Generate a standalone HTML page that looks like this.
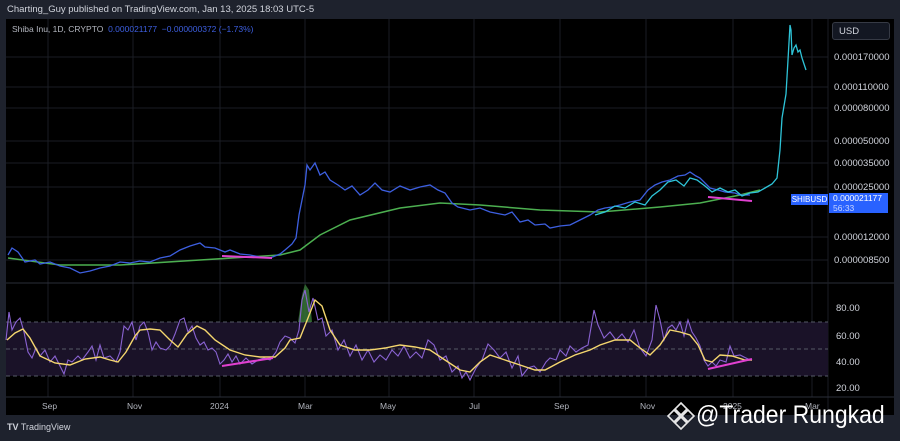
<!DOCTYPE html>
<html><head><style>
body{margin:0;width:900px;height:441px;background:#1e222d;font-family:"Liberation Sans",sans-serif;overflow:hidden;position:relative}
.t{position:absolute;white-space:nowrap}
.ax{position:absolute;left:834px;font-size:9.5px;color:#d1d4dc}
</style></head><body>
<div class="t" style="left:7px;top:4px;font-size:9.5px;color:#d1d4dc">Charting_Guy published on TradingView.com, Jan 13, 2025 18:03 UTC-5</div>
<div style="position:absolute;left:6px;top:19px;width:888px;height:396px;background:#000"></div>
<svg style="position:absolute;left:0;top:0" width="900" height="441">
<g stroke="#1a1d24" stroke-width="1">
<line x1="48" y1="19" x2="48" y2="397"/><line x1="133" y1="19" x2="133" y2="397"/><line x1="220" y1="19" x2="220" y2="397"/><line x1="305" y1="19" x2="305" y2="397"/><line x1="389" y1="19" x2="389" y2="397"/><line x1="474" y1="19" x2="474" y2="397"/><line x1="560" y1="19" x2="560" y2="397"/><line x1="646" y1="19" x2="646" y2="397"/><line x1="733" y1="19" x2="733" y2="397"/><line x1="812" y1="19" x2="812" y2="397"/>
<line x1="6" y1="57" x2="828" y2="57"/><line x1="6" y1="87" x2="828" y2="87"/><line x1="6" y1="108" x2="828" y2="108"/><line x1="6" y1="141" x2="828" y2="141"/><line x1="6" y1="163" x2="828" y2="163"/><line x1="6" y1="187" x2="828" y2="187"/><line x1="6" y1="237" x2="828" y2="237"/><line x1="6" y1="260" x2="828" y2="260"/>
</g>
<line x1="6" y1="283" x2="894" y2="283" stroke="#2a2e39"/>
<line x1="828" y1="19" x2="828" y2="415" stroke="#1a1d24"/>
<line x1="6" y1="397" x2="894" y2="397" stroke="#2a2e39"/>
<rect x="6" y="322" width="822" height="54" fill="#1a1228"/>
<g stroke="#555a66" stroke-dasharray="4,3"><line x1="6" y1="322" x2="828" y2="322"/><line x1="6" y1="349" x2="828" y2="349"/><line x1="6" y1="376" x2="828" y2="376"/></g>
<polyline fill="none" stroke="#4caf50" stroke-width="1.5" points="8,258 60,265 120,265 200,260 280,255 300,250 320,235 350,220 400,208 440,203 480,205 540,210 600,212 660,207 700,203 740,195 760,190"/>
<polyline fill="none" stroke="#3d5fe0" stroke-width="1.3" points="8,255 12,248 18,252 25,262 35,260 40,264 50,262 60,266 70,268 80,273 90,271 100,268 110,266 120,262 130,263 140,261 150,262 160,258 170,256 180,250 190,246 200,243 205,247 215,248 225,252 230,250 240,254 250,255 260,257 270,258 280,254 285,250 292,244 296,238 299,215 302,200 305,185 307,165 310,170 315,163 320,175 325,172 330,180 338,185 345,190 352,186 360,195 368,190 375,183 382,190 390,192 400,186 410,190 420,187 430,185 438,190 445,193 452,203 458,207 470,210 480,208 490,212 500,214 505,215 512,212 520,222 528,220 535,225 545,224 550,228 560,226 570,225 580,220 590,215 598,210 605,208 612,207 620,205 630,202 640,200 648,190 655,185 662,182 670,180 678,176 685,175 690,172 696,176 700,178 706,184 710,188 718,190 725,192 735,193 740,195 750,195"/>
<polyline fill="none" stroke="#2ec4d8" stroke-width="1.3" points="595,215 605,212 615,206 625,208 635,202 645,205 652,196 660,190 668,182 676,180 684,186 690,178 697,180 705,186 712,192 720,188 728,192 735,190 742,196 750,193 758,192 765,188 772,184 777,178 780,150 782,118 785,100 786,94 788,60 790,25 791,30 792,55 794,48 796,45 798,52 800,50 802,58 804,64 806,70"/>
<line x1="222" y1="256" x2="272" y2="258" stroke="#e040d0" stroke-width="2"/>
<line x1="708" y1="197" x2="752" y2="201" stroke="#e040d0" stroke-width="2"/>
<polygon points="298,322 302,295 305,284 309,290 312,322" fill="#3a7a3a" opacity="0.8"/>
<polyline fill="none" stroke="#8a63d2" stroke-width="1.1" points="6,340 9,312 12,330 16,322 20,318 24,332 28,352 32,358 36,348 40,356 45,350 50,362 55,356 60,366 64,374 68,360 72,362 78,356 82,360 88,352 92,346 96,360 100,345 104,358 110,356 116,362 120,352 124,326 128,330 132,322 136,340 140,326 144,322 148,332 152,350 156,342 160,348 166,350 170,346 175,334 180,320 184,318 188,332 192,326 196,338 200,345 204,342 208,350 212,348 216,352 220,364 224,360 228,354 232,362 236,356 240,364 246,358 252,364 258,360 264,358 270,360 276,352 280,342 285,336 290,338 295,343 299,330 302,300 305,290 309,312 313,298 318,320 322,318 326,336 332,330 338,350 344,340 350,356 356,345 362,360 368,350 374,362 380,355 386,360 392,350 398,356 404,346 410,358 416,352 422,358 428,340 434,345 440,360 446,356 452,372 458,366 462,378 466,372 470,380 476,368 482,360 488,344 494,350 500,358 506,352 512,368 518,356 522,376 528,368 534,366 540,372 546,362 550,358 556,360 560,350 566,356 570,346 576,352 582,348 588,345 594,310 598,325 604,338 610,332 616,340 622,334 628,342 634,330 640,348 646,356 652,340 656,305 660,320 664,340 668,328 672,325 676,330 680,322 684,336 688,320 692,332 696,338 700,346 704,360 708,366 712,362 716,366 720,360 726,362 730,346 734,356 740,355 746,358 750,360"/>
<polyline fill="none" stroke="#f5d76e" stroke-width="1.4" points="7,340 15,333 23,329 30,338 40,356 55,363 70,365 85,359 100,357 110,360 118,362 126,352 135,336 140,330 150,329 160,330 170,340 178,347 187,334 197,326 205,330 215,340 230,350 245,355 260,357 275,357 285,348 290,340 300,338 308,318 315,300 322,306 330,330 340,345 355,350 370,350 385,348 400,345 415,347 430,350 445,360 460,370 470,372 480,362 490,355 505,360 520,365 535,370 545,370 560,362 575,355 590,350 600,345 615,340 630,340 640,348 650,355 660,345 670,330 680,332 690,335 698,345 705,360 712,362 720,355 732,356 745,360 752,360"/>
<line x1="222" y1="366" x2="273" y2="358" stroke="#e040d0" stroke-width="2"/>
<line x1="708" y1="369" x2="752" y2="359" stroke="#e040d0" stroke-width="2"/>
<g fill="none" stroke="#e8e8e8" stroke-width="1.6">
<path d="M681,403 L687,409 L681,415 L675,409 Z"/>
<path d="M681,417 L687,423 L681,429 L675,423 Z"/>
<path d="M674,410 L680,416 L674,422 L668,416 Z"/>
<path d="M688,410 L694,416 L688,422 L682,416 Z"/>
</g>
</svg>
<div class="t" style="left:12px;top:24px;font-size:8.5px;color:#b2b5be">Shiba Inu, 1D, CRYPTO <span style="color:#3d5fe0">&nbsp;0.000021177 &nbsp;−0.000000372 (−1.73%)</span></div>
<div style="position:absolute;left:832px;top:22px;width:58px;height:18px;border:1px solid #363a45;border-radius:3px;background:#131722;color:#d1d4dc;font-size:9.5px;line-height:18px;padding-left:6px;box-sizing:border-box">USD</div>
<div class="ax" style="top:52px">0.000170000</div>
<div class="ax" style="top:82px">0.000110000</div>
<div class="ax" style="top:103px">0.000080000</div>
<div class="ax" style="top:136px">0.000050000</div>
<div class="ax" style="top:158px">0.000035000</div>
<div class="ax" style="top:182px">0.000025000</div>
<div class="ax" style="top:232px">0.000012000</div>
<div class="ax" style="top:255px">0.000008500</div>
<div class="t" style="left:791px;top:194px;width:37px;height:11px;background:#2962ff;color:#fff;font-size:8px;line-height:11px;text-align:center">SHIBUSD</div>
<div class="t" style="left:829px;top:193px;width:59px;height:20px;background:#2962ff;color:#fff;font-size:8.5px;line-height:10px;padding-left:4px;box-sizing:border-box">0.000021177<br><span style="color:#c8d4ff">56:33</span></div>
<div class="ax" style="top:303px;left:836px">80.00</div>
<div class="ax" style="top:331px;left:836px">60.00</div>
<div class="ax" style="top:357px;left:836px">40.00</div>
<div class="ax" style="top:383px;left:836px">20.00</div>
<div style="position:absolute;top:401px;font-size:8.5px;color:#b2b5be;width:900px">
<span class="t" style="left:42px">Sep</span><span class="t" style="left:127px">Nov</span><span class="t" style="left:210px">2024</span><span class="t" style="left:298px">Mar</span><span class="t" style="left:380px">May</span><span class="t" style="left:469px">Jul</span><span class="t" style="left:554px">Sep</span><span class="t" style="left:640px">Nov</span><span class="t" style="left:723px">2025</span><span class="t" style="left:805px">Mar</span></div>
<div class="t" style="left:7px;top:422px;font-size:9px;color:#d1d4dc"><b>TV</b> TradingView</div>
<div class="t" style="left:696px;top:401px;font-size:25px;color:#fff;transform:scaleX(0.92);transform-origin:left">@Trader Rungkad</div>
</body></html>
